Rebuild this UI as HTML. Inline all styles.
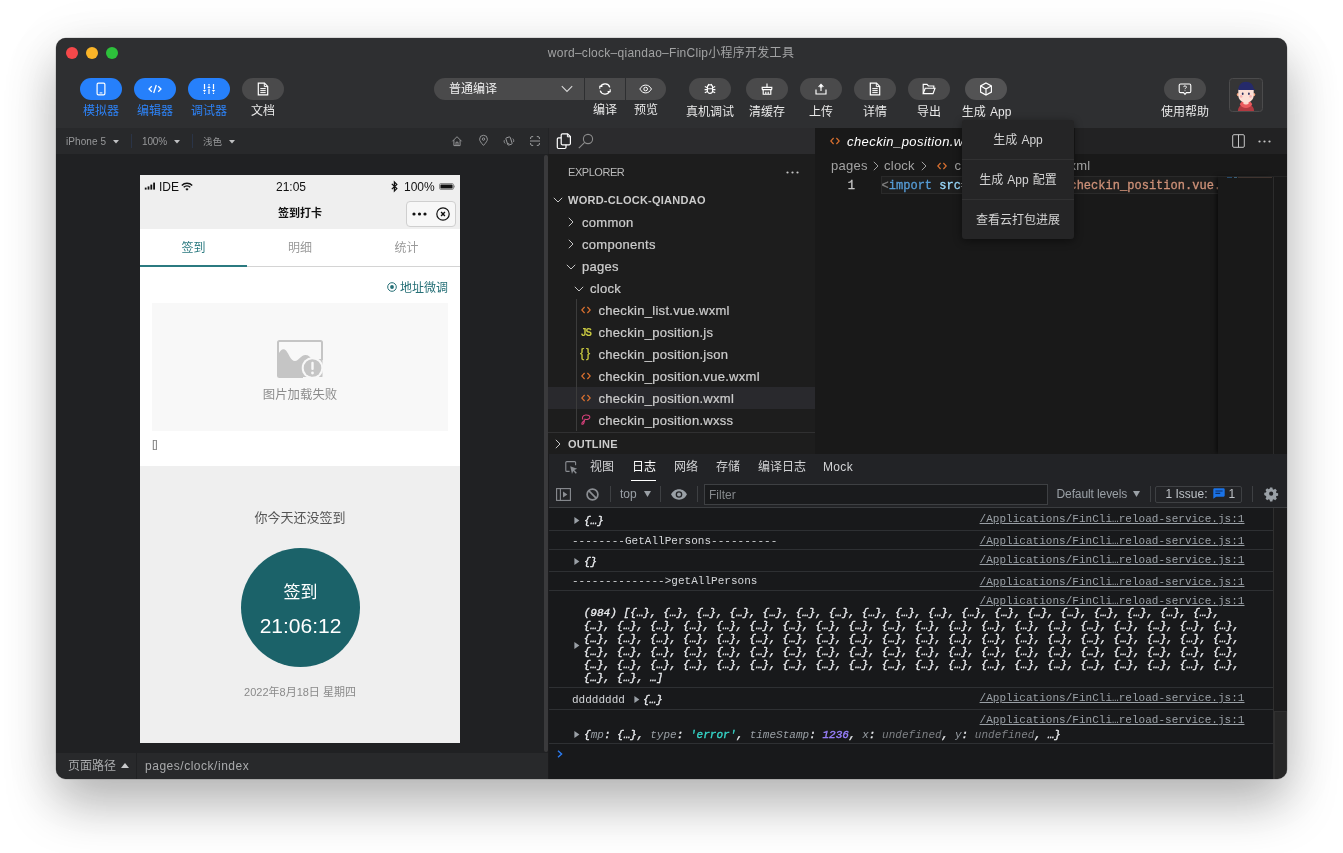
<!DOCTYPE html>
<html lang="zh-CN">
<head>
<meta charset="utf-8">
<title>word-clock-qiandao-FinClip小程序开发工具</title>
<style>
*{box-sizing:border-box;margin:0;padding:0}
html,body{width:1343px;height:853px;overflow:hidden;background:#fff}
body{font-family:"Liberation Sans","Noto Sans CJK SC",sans-serif;font-size:12px;color:#fff;position:relative}
.a{position:absolute}
#win{position:absolute;left:56px;top:38px;width:1231px;height:741px;border-radius:10px;overflow:hidden;background:#2e2f31;z-index:2}
#shadow{position:absolute;left:56px;top:38px;width:1231px;height:741px;border-radius:10px;z-index:1;
 box-shadow:0 0 0 0.5px rgba(0,0,0,.2),0 26px 50px rgba(0,0,0,.26),0 8px 60px rgba(0,0,0,.08)}
#in{position:absolute;left:-56px;top:-38px;width:1343px;height:853px;will-change:transform}
svg{display:block;overflow:visible}
.ctr{text-align:center;white-space:nowrap}
.nw{white-space:nowrap}
/* toolbar */
.pill{position:absolute;top:78px;width:42px;height:22px;border-radius:11px;background:#4a4a4b}
.pill.on{background:#2680fb}
.pill svg{position:absolute;left:50%;top:50%}
.tl{position:absolute;top:103px;height:16px;line-height:16px;font-size:12px;width:80px;margin-left:-40px;text-align:center;white-space:nowrap;color:#e9e9e9}
.tl.on{color:#2d83f8}
.tr{height:18px;line-height:18px;font-size:13px;color:#cccccc;letter-spacing:0.300px;-webkit-text-stroke:0.220px}
.bc{height:17px;line-height:17px;font-size:13px;color:#a3a3a3;letter-spacing:0.250px}
.ct{font-size:11px;color:#e8eaed;letter-spacing:0.022px}
.pl{color:#d5d7da}
.ob{font-style:italic;-webkit-text-stroke:0.350px}
.lk{font-size:11px;color:#9aa0a6;text-decoration:underline;letter-spacing:0.022px}
.k{color:#9aa0a6;-webkit-text-stroke:0}.s{color:#35d4c7}.n{color:#9980ff}.u{color:#7f8286;-webkit-text-stroke:0}
.mono{font-family:"Liberation Mono","Noto Sans CJK SC",monospace}
</style>
</head>
<body>
<div id="shadow"></div>
<div id="win"><div id="in">

<!-- ===== TITLE + TOOLBAR ===== -->
<div class="a" id="topbar" style="left:56px;top:38px;width:1231px;height:90px;background:#2e2f31"></div>
<div class="a" style="left:66px;top:47px;width:12px;height:12px;border-radius:50%;background:#f5484a"></div>
<div class="a" style="left:86px;top:47px;width:12px;height:12px;border-radius:50%;background:#fbb528"></div>
<div class="a" style="left:106px;top:47px;width:12px;height:12px;border-radius:50%;background:#2dc13b"></div>
<div class="a ctr" style="left:471px;top:45px;width:400px;height:16px;line-height:16px;font-size:12px;letter-spacing:0.270px;color:#a2a3a4">word–clock–qiandao–FinClip小程序开发工具</div>

<!-- left group -->
<div class="pill on" style="left:80px"><svg width="10" height="14" style="margin:-7px 0 0 -5px" viewBox="0 0 10 14" fill="none" stroke="#fff" stroke-width="1.2"><rect x="1.1" y="1.1" width="7.8" height="11.8" rx="1.3"/><path d="M3.6 10.9h2.8" stroke-width="1"/></svg></div>
<div class="pill on" style="left:134px"><svg width="14" height="10" style="margin:-5px 0 0 -7px" viewBox="0 0 14 10" fill="none" stroke="#fff" stroke-width="1.25"><path d="M3.8 2.2L1 5l2.8 2.8M10.2 2.2L13 5l-2.8 2.8M8.3 1L5.7 9"/></svg></div>
<div class="pill on" style="left:188px"><svg width="14" height="12" style="margin:-6px 0 0 -7px" viewBox="0 0 14 12" fill="none" stroke="#fff" stroke-width="1.2"><path d="M2.5 1v5.2M7 11V5.8M11.5 1v5.2M2.5 11v-1.2M7 1v1.6M11.5 11v-1.2"/><path d="M0.7 7h3.6L2.5 9zM5.2 5h3.6L7 3zM9.7 7h3.6L11.5 9z" fill="#fff" stroke="none"/></svg></div>
<div class="pill" style="left:242px"><svg width="12" height="14" style="margin:-7px 0 0 -6px" viewBox="0 0 12 14" fill="none" stroke="#fff" stroke-width="1.2"><path d="M1.3 1.2h6.2l3.2 3.2v8.4H1.3z"/><path d="M7.3 1.4v3.2h3.2M3.3 6.6h5.4M3.3 8.6h5.4M3.3 10.6h5.4" stroke-width="1"/></svg></div>
<div class="tl on" style="left:101px;top:103px">模拟器</div>
<div class="tl on" style="left:155px;top:103px">编辑器</div>
<div class="tl on" style="left:209px;top:103px">调试器</div>
<div class="tl" style="left:263px;top:103px">文档</div>

<!-- compile group -->
<div class="a" style="left:434px;top:78px;width:232px;height:22px;border-radius:11px;background:#4a4a4b"></div>
<div class="a" style="left:584px;top:78px;width:1px;height:22px;background:#2e2f31"></div>
<div class="a" style="left:625px;top:78px;width:1px;height:22px;background:#2e2f31"></div>
<div class="a nw" style="left:449px;top:81px;height:16px;line-height:16px;font-size:12px;color:#f2f2f2">普通编译</div>
<svg class="a" style="left:561px;top:85px" width="12" height="8" viewBox="0 0 12 8" fill="none" stroke="#d8d8d8" stroke-width="1.1"><path d="M0.8 1.2L6 6.4l5.2-5.2"/></svg>
<svg class="a" style="left:598px;top:82px" width="14" height="14" viewBox="0 0 14 14" fill="none" stroke="#fff" stroke-width="1.3"><path d="M2.2 8.6A5 5 0 0 0 11.5 9.2M11.8 5.4A5 5 0 0 0 2.5 4.8"/><path d="M9.6 9.6h2.6v-2.4M4.4 4.4H1.8v2.4" stroke-width="1.1"/></svg>
<svg class="a" style="left:638.500px;top:84px" width="13.300" height="10" viewBox="0 0 16 12" fill="none" stroke="#fff" stroke-width="1.2"><path d="M1 6C2.8 2.8 5.2 1.3 8 1.3S13.2 2.8 15 6c-1.8 3.2-4.2 4.7-7 4.7S2.8 9.200 1 6z"/><circle cx="8" cy="6" r="2.2"/></svg>
<div class="tl" style="left:605px;top:102px">编译</div>
<div class="tl" style="left:646px;top:102px">预览</div>

<!-- right group -->
<div class="pill" style="left:689px"><svg width="12" height="12" style="margin:-6px 0 0 -6px" viewBox="0 0 12 12" fill="none" stroke="#fff" stroke-width="1.1"><path d="M3.4 4.4a2.600 2.600 0 0 1 5.200 0v3.400a2.600 2.600 0 0 1-5.200 0z"/><path d="M3.400 5.800h5.200M0.800 3.600l2.600 1.200M11.200 3.600l-2.600 1.200M0.600 6.600h2.800M11.400 6.600H8.600M0.800 9.800l2.600-1.400M11.200 9.800l-2.600-1.400M4.200 1l1 1.200M7.800 1l-1 1.200"/></svg></div>
<div class="pill" style="left:746px"><svg width="12" height="12" style="margin:-6px 0 0 -6px" viewBox="0 0 12 12" fill="none" stroke="#fff" stroke-width="1.15"><path d="M6 0.600v3.400M1.200 6.600V4.400h9.600v2.200M1 6.600h10M2.200 6.800v4.400h7.600V6.800M4.800 11V8.800M7.200 11V8.800"/></svg></div>
<div class="pill" style="left:800px"><svg width="12" height="12" style="margin:-6px 0 0 -6px" viewBox="0 0 12 12" fill="none" stroke="#fff" stroke-width="1.15"><path d="M1 6.600v4.400h10V6.600"/><path d="M6 8V1.800M3.600 3.800L6 1.400l2.400 2.400" /><path d="M4.600 4.400h2.800L6 1.600z" fill="#fff" stroke="none"/></svg></div>
<div class="pill" style="left:854px"><svg width="12" height="14" style="margin:-7px 0 0 -6px" viewBox="0 0 12 14" fill="none" stroke="#fff" stroke-width="1.2"><path d="M1.300 1.200h6.200l3.200 3.200v8.400H1.300z"/><path d="M7.300 1.400v3.200h3.200M3.300 6.600h5.400M3.300 8.600h5.400M3.300 10.600h5.400" stroke-width="1"/></svg></div>
<div class="pill" style="left:908px"><svg width="14" height="12" style="margin:-6px 0 0 -7px" viewBox="0 0 14 12" fill="none" stroke="#fff" stroke-width="1.15"><path d="M1.200 10.600V1.400h3.800l1.400 1.600h5.400v2.200"/><path d="M1.200 10.600l2-5.400h9.800l-2 5.400z"/></svg></div>
<div class="pill" style="left:965px;background:#535354"><svg width="14" height="14" style="margin:-7px 0 0 -7px" viewBox="0 0 14 14" fill="none" stroke="#fff" stroke-width="1.150"><path d="M7 0.900l5.400 3v6.200L7 13.100l-5.400-3V3.900z"/><path d="M1.800 4L7 7l5.200-3M7 7v6"/></svg></div>
<div class="tl" style="left:710px;top:103.500px">真机调试</div>
<div class="tl" style="left:767px;top:103.500px">清缓存</div>
<div class="tl" style="left:821px;top:103.500px">上传</div>
<div class="tl" style="left:875px;top:103.500px">详情</div>
<div class="tl" style="left:929px;top:103.500px">导出</div>
<div class="tl" style="left:986.500px;top:103.500px;word-spacing:1px">生成 App</div>

<!-- help + avatar -->
<div class="pill" style="left:1164px"><svg width="14" height="13" style="margin:-6px 0 0 -7px" viewBox="0 0 14 13" fill="none" stroke="#fff" stroke-width="1.100"><path d="M2.600 1h8.800a1.400 1.400 0 0 1 1.400 1.400v5.800a1.400 1.400 0 0 1-1.400 1.400H8.400L7 11.400 5.600 9.600H2.600a1.400 1.400 0 0 1-1.400-1.400V2.400A1.400 1.400 0 0 1 2.600 1z"/><path d="M5.700 4.100a1.300 1.300 0 1 1 1.900 1.200c-.4.200-.6.500-.6.900M7 7.400v.7" stroke-width="1"/></svg></div>
<div class="tl" style="left:1185px;top:103.500px">使用帮助</div>
<div class="a" id="avatar" style="left:1229px;top:78px;width:34px;height:34px;border-radius:3.500px;background:#353536;border:1px solid #4b4b4c;overflow:hidden">
<svg width="32" height="32" viewBox="0 0 32 32"><path d="M7.900 32c0-3.400 2-5.600 4.600-6.200h7c2.600.600 4.600 2.800 4.600 6.200z" fill="#b23a41"/><path d="M9.800 25.200c.800-2 2.400-3 3.400-3.200h5.600c1 .200 2.600 1.200 3.400 3.200-1.200 2.600-3.600 3.800-6.200 3.800s-5-1.200-6.200-3.800z" fill="#ea5a5d"/><path d="M13.400 21h5.200v3.400c-.800 1.400-4.400 1.400-5.200 0z" fill="#fbd9cd"/><ellipse cx="8" cy="15.600" rx="1.200" ry="1.600" fill="#f3a079"/><ellipse cx="24" cy="15.600" rx="1.200" ry="1.600" fill="#f3a079"/><path d="M8.300 10.500h15.400v5.500c0 4.600-3.400 7.600-7.700 7.600s-7.700-3-7.700-7.600z" fill="#fde0d6"/><path d="M8.300 10.900C8.300 5.900 11.600 2.700 16 2.700s7.700 3.200 7.700 7.200l1 .100c.500 0 .500 1 0 1H8.300z" fill="#252a6b"/><ellipse cx="12.700" cy="14.700" rx=".900" ry="1.300" fill="#2a2d5e"/><ellipse cx="18.900" cy="14.700" rx=".900" ry="1.300" fill="#2a2d5e"/><circle cx="11.200" cy="17.400" r="1.300" fill="#f9b4b4"/><circle cx="20.500" cy="17.400" r="1.300" fill="#f9b4b4"/></svg>
</div>


<!-- ===== DEVICE BAR ===== -->
<div class="a" style="left:56px;top:128px;width:492px;height:26px;background:#28292b"></div>

<div class="a nw" style="left:66px;top:135px;height:14px;line-height:14px;font-size:10px;letter-spacing:0.080px;color:#97989a">iPhone 5</div>
<svg class="a" style="left:113.300px;top:140.300px" width="6" height="3.500" viewBox="0 0 6 3.500"><path d="M0 0h6L3 3.500z" fill="#c0c1c3"/></svg>
<div class="a" style="left:131px;top:134px;width:1px;height:14px;background:#2a3447"></div>
<div class="a nw" style="left:142px;top:135px;height:14px;line-height:14px;font-size:10px;letter-spacing:-0.150px;color:#97989a">100%</div>
<svg class="a" style="left:173.600px;top:140.300px" width="6" height="3.500" viewBox="0 0 6 3.500"><path d="M0 0h6L3 3.500z" fill="#c0c1c3"/></svg>
<div class="a" style="left:192px;top:134px;width:1px;height:14px;background:#2a3447"></div>
<div class="a nw" style="left:203px;top:135px;height:14px;line-height:14px;font-size:9.500px;color:#97989a">浅色</div>
<svg class="a" style="left:228.600px;top:140.300px" width="6" height="3.500" viewBox="0 0 6 3.500"><path d="M0 0h6L3 3.500z" fill="#c0c1c3"/></svg>
<!-- device bar icons -->
<svg class="a" style="left:452px;top:135.800px" width="10" height="10" viewBox="0 0 10 10" fill="none" stroke="#98999b" stroke-width="0.950"><path d="M0.400 5.300L5 0.700l4.600 4.600M1.900 4.200v5.400h6.200V4.200M4 9.600V6.200h2v3.400"/></svg>
<svg class="a" style="left:479px;top:135px" width="9" height="11" viewBox="0 0 9 11" fill="none" stroke="#98999b" stroke-width="0.950"><path d="M4.500 10.400C2 7.700 0.600 5.700 0.600 4.200a3.900 3.900 0 0 1 7.800 0c0 1.500-1.400 3.500-3.900 6.200z"/><circle cx="4.500" cy="4.100" r="1.200"/></svg>
<svg class="a" style="left:503px;top:135px" width="12" height="12" viewBox="0 0 12 12" fill="none" stroke="#9a9b9d" stroke-width="0.900"><rect x="3.700" y="2.200" width="4.600" height="7.600" rx="0.900" transform="rotate(-18 6 6)"/><path d="M4.600 9l1.600-.500" transform="rotate(0)"/><path d="M1.300 5.200c-.400 1.200-.100 2.400.800 3.200M10.500 7c.500-1.200.200-2.500-.700-3.400"/></svg>
<svg class="a" style="left:530px;top:136px" width="10" height="10" viewBox="0 0 10 10" fill="none" stroke="#9a9b9d" stroke-width="1"><path d="M0.600 3V2A1.400 1.400 0 0 1 2 0.600h1.200M6.800 0.600H8A1.400 1.400 0 0 1 9.400 2v1M0.600 7V8A1.400 1.400 0 0 0 2 9.400h1.200M6.800 9.400H8A1.400 1.400 0 0 0 9.400 8V7M0 5h10"/></svg>


<!-- ===== SIMULATOR ===== -->
<div class="a" style="left:56px;top:154px;width:492px;height:599px;background:#202123"></div>
<div class="a" style="left:544.200px;top:155px;width:3.600px;height:597px;border-radius:2px;background:#3a3a3c"></div>

<div class="a" id="phone" style="left:140px;top:175px;width:320px;height:568px;background:#efefef;color:#000;overflow:hidden">
 <div class="a" style="left:0;top:0;width:320px;height:54px;background:#efefef"></div>
 <!-- status -->
 <svg class="a" style="left:4px;top:7px" width="12" height="8" viewBox="0 0 12 8" fill="#111"><rect x="0.800" y="5.600" width="1.800" height="2"/><rect x="3.600" y="4.400" width="1.800" height="3.200"/><rect x="6.400" y="2.600" width="1.800" height="5"/><rect x="9.200" y="0.600" width="1.800" height="7"/></svg>
 <div class="a nw" style="left:19px;top:4px;height:16px;line-height:16px;font-size:12px;color:#111">IDE</div>
 <svg class="a" style="left:41px;top:7px" width="12" height="9" viewBox="0 0 12 9" fill="none" stroke="#111" stroke-width="1.400"><path d="M0.800 3.400a7.400 7.400 0 0 1 10.400 0M2.700 5.300a4.700 4.700 0 0 1 6.600 0"/><path d="M4.400 7L6 8.700 7.600 7a2.300 2.300 0 0 0-3.200 0z" fill="#111" stroke="none"/></svg>
 <div class="a ctr" style="left:101px;top:4px;width:100px;height:16px;line-height:16px;font-size:12px;color:#111">21:05</div>
 <svg class="a" style="left:251px;top:6px" width="7" height="11" viewBox="0 0 7 11" fill="none" stroke="#111" stroke-width="1.250"><path d="M0.800 2.900l5 4.700L3.400 10V1l2.400 2.400-5 4.700"/></svg>
 <div class="a nw" style="left:264px;top:4px;height:16px;line-height:16px;font-size:12px;color:#111">100%</div>
 <svg class="a" style="left:299px;top:8px" width="17" height="7" viewBox="0 0 17 7"><rect x="0.500" y="0.500" width="14" height="6" rx="1.400" fill="none" stroke="#777" stroke-width="0.800"/><rect x="1.400" y="1.400" width="12.200" height="4.200" rx="0.700" fill="#111"/><path d="M15.300 2.300c.8.200.8 2.200 0 2.400z" fill="#555"/></svg>
 <!-- nav -->
 <div class="a ctr" style="left:60px;top:30px;width:200px;height:16px;line-height:16px;font-size:11px;font-weight:bold;color:#111">签到打卡</div>
 <div class="a" style="left:266px;top:26px;width:50px;height:26px;border:1px solid #cfcfcf;border-radius:4px;background:#f7f7f7"></div>
 <svg class="a" style="left:272px;top:37px" width="15" height="4" viewBox="0 0 15 4" fill="#111"><circle cx="2" cy="2" r="1.600"/><circle cx="7.500" cy="2" r="1.600"/><circle cx="13" cy="2" r="1.600"/></svg>
 <svg class="a" style="left:296px;top:32px" width="14" height="14" viewBox="0 0 14 14" fill="none" stroke="#111"><circle cx="7" cy="7" r="6.200" stroke-width="1.200"/><path d="M5.100 5.100l3.800 3.800M8.900 5.100L5.100 8.900" stroke-width="1.400"/></svg>
 <!-- tabs -->
 <div class="a" style="left:0;top:54px;width:320px;height:237px;background:#fff"></div>
 <div class="a ctr" style="left:0;top:65px;width:107px;height:16px;line-height:16px;font-size:12px;color:#2b7a80">签到</div>
 <div class="a ctr" style="left:107px;top:65px;width:106px;height:16px;line-height:16px;font-size:12px;color:#9a9a9a">明细</div>
 <div class="a ctr" style="left:213px;top:65px;width:107px;height:16px;line-height:16px;font-size:12px;color:#9a9a9a">统计</div>
 <div class="a" style="left:0;top:91px;width:320px;height:1px;background:#d4d4d4"></div>
 <div class="a" style="left:0;top:90px;width:107px;height:2px;background:#2b7a80"></div>
 <!-- content -->
 <svg class="a" style="left:247px;top:107px" width="10" height="10" viewBox="0 0 10 10" fill="none" stroke="#256f76"><circle cx="5" cy="5" r="4.300" stroke-width="1"/><circle cx="5" cy="5" r="1.900" fill="#256f76" stroke="none"/></svg>
 <div class="a nw" style="left:260px;top:104.500px;height:16px;line-height:16px;font-size:12px;color:#256f76">地址微调</div>
 <div class="a" style="left:12px;top:128px;width:296px;height:128px;background:#f8f8f8"></div>
 <svg class="a" style="left:137px;top:165px" width="47" height="38" viewBox="0 0 47 38"><rect x="1" y="1" width="44" height="36" rx="1.500" fill="none" stroke="#c5c5c5" stroke-width="2"/><path d="M1.500 37V14c2-4.500 5-6 7.500-3.500 3 3.500 4.500 10.500 9 10.500 4 0 5.500-6 10.500-6 3 0 4.500 2 6 4l10 0V37z" fill="#c5c5c5"/><circle cx="35.500" cy="28" r="10.800" fill="#f8f8f8"/><circle cx="35.500" cy="28" r="8.800" fill="#c5c5c5"/><rect x="34.300" y="21.800" width="2.400" height="8.200" rx="1.100" fill="#f8f8f8"/><circle cx="35.500" cy="33" r="1.400" fill="#f8f8f8"/><rect x="26" y="37" width="21" height="3" fill="#f8f8f8"/><rect x="45.500" y="20" width="3" height="20" fill="#f8f8f8"/></svg>
 <div class="a ctr" style="left:60px;top:212px;width:200px;height:16px;line-height:16px;font-size:12.400px;color:#8c8c8c">图片加载失败</div>
 <div class="a nw" style="left:12px;top:260.800px;height:16px;line-height:16px;font-size:11.500px;color:#808080;letter-spacing:-0.600px">[]</div>
 <!-- bottom -->
 <div class="a ctr" style="left:60px;top:334px;width:200px;height:18px;line-height:18px;font-size:13px;color:#555">你今天还没签到</div>
 <div class="a" style="left:101px;top:373px;width:119px;height:119px;border-radius:50%;background:#1b6269"></div>
 <div class="a ctr" style="left:101px;top:405.500px;width:119px;height:24px;line-height:24px;font-size:17px;color:#fff">签到</div>
 <div class="a ctr" style="left:101px;top:438px;width:119px;height:26px;line-height:26px;font-size:21px;color:#fff">21:06:12</div>
 <div class="a ctr" style="left:60px;top:509px;width:200px;height:16px;line-height:16px;font-size:11px;color:#8a8a8a">2022年8月18日 星期四</div>
</div>


<!-- ===== SIM STATUS BAR ===== -->
<div class="a" style="left:56px;top:753px;width:492px;height:26px;background:#28292b"></div>

<div class="a nw" style="left:68px;top:758px;height:16px;line-height:16px;font-size:12px;color:#a9aaac">页面路径</div>
<svg class="a" style="left:121px;top:763px" width="8" height="5" viewBox="0 0 8 5"><path d="M0 5h8L4 0z" fill="#c8c9cb"/></svg>
<div class="a" style="left:136px;top:753px;width:1px;height:26px;background:#202123"></div>
<div class="a nw" style="left:145px;top:758px;height:16px;line-height:16px;font-size:12px;letter-spacing:0.520px;color:#a9aaac">pages/clock/index</div>


<!-- ===== EDITOR ===== -->
<div class="a" style="left:548px;top:128px;width:739px;height:326px;background:#1c1c1c"></div>
<div class="a" style="left:548px;top:128px;width:267px;height:26px;background:#2b2b2d"></div>
<div class="a" style="left:548px;top:154px;width:267px;height:300px;background:#1d1d1d"></div>
<div class="a" style="left:815px;top:128px;width:472px;height:26px;background:#222223"></div>
<div class="a" style="left:815px;top:128px;width:260px;height:26px;background:#191919"></div>
<div class="a" style="left:815px;top:154px;width:472px;height:300px;background:#191919"></div>
<svg class="a" style="left:556px;top:133px" width="16" height="17" viewBox="0 0 16 17" fill="none" stroke="#fff" stroke-width="1.200"><path d="M6.400 0.800h5.200l2.800 2.800v7a1.200 1.200 0 0 1-1.200 1.200H6.400a1.200 1.200 0 0 1-1.200-1.200V2a1.200 1.200 0 0 1 1.200-1.200z"/><path d="M11.400 1v2.800h2.800" stroke-width="1"/><path d="M5.200 4.900H2.500a1.200 1.200 0 0 0-1.200 1.200v8.200a1.200 1.200 0 0 0 1.200 1.200h6.300a1.200 1.200 0 0 0 1.200-1.200v-2.500"/></svg>
<svg class="a" style="left:578px;top:133px" width="16" height="16" viewBox="0 0 16 16" fill="none" stroke="#8c8c8c" stroke-width="1.100"><circle cx="10" cy="6" r="4.600"/><path d="M6.700 9.300L0.800 15.200"/></svg>
<div class="a nw" style="left:568px;top:164px;height:16px;line-height:16px;font-size:11px;letter-spacing:-0.450px;color:#bbbbbb">EXPLORER</div>
<svg class="a" style="left:786px;top:171px" width="13" height="3" viewBox="0 0 13 3" fill="#c5c5c5"><circle cx="1.500" cy="1.500" r="1.100"/><circle cx="6.500" cy="1.500" r="1.100"/><circle cx="11.500" cy="1.500" r="1.100"/></svg>
<svg class="a" style="left:553px;top:197px" width="10" height="6" viewBox="0 0 10 6"><path d="M0.800 0.800L5 5 9.200 0.800" fill="none" stroke="#c5c5c5" stroke-width="1"/></svg>
<div class="a nw" id="t_root" style="left:568px;top:192px;height:16px;line-height:16px;font-size:11px;font-weight:bold;letter-spacing:0.250px;color:#cccccc">WORD-CLOCK-QIANDAO</div>
<div class="a" style="left:548px;top:387px;width:267px;height:22px;background:#29292d"></div>
<div class="a" style="left:576px;top:299px;width:1px;height:132px;background:#3c3c3c"></div>
<svg class="a" style="left:568px;top:217px" width="6" height="10" viewBox="0 0 6 10"><path d="M0.800 0.800L5 5 0.800 9.200" fill="none" stroke="#c5c5c5" stroke-width="1"/></svg>
<div class="a nw tr" style="left:582px;top:214px">common</div>
<svg class="a" style="left:568px;top:239px" width="6" height="10" viewBox="0 0 6 10"><path d="M0.800 0.800L5 5 0.800 9.200" fill="none" stroke="#c5c5c5" stroke-width="1"/></svg>
<div class="a nw tr" style="left:582px;top:236px">components</div>
<svg class="a" style="left:566px;top:264px" width="10" height="6" viewBox="0 0 10 6"><path d="M0.800 0.800L5 5 9.200 0.800" fill="none" stroke="#c5c5c5" stroke-width="1"/></svg>
<div class="a nw tr" style="left:582px;top:258px">pages</div>
<svg class="a" style="left:574px;top:286px" width="10" height="6" viewBox="0 0 10 6"><path d="M0.800 0.800L5 5 9.200 0.800" fill="none" stroke="#c5c5c5" stroke-width="1"/></svg>
<div class="a nw tr" style="left:590px;top:280px">clock</div>
<svg class="a" style="left:581px;top:306px" width="10" height="8" viewBox="0 0 10 8"><path d="M3.600 1L0.800 4l2.800 3M6.400 1l2.800 3-2.800 3" fill="none" stroke="#d9702f" stroke-width="1.150"/></svg>
<div class="a nw tr" style="left:598.500px;top:302px">checkin_list.vue.wxml</div>
<div class="a nw" style="left:580.500px;top:325px;height:14px;line-height:14px;font-size:10.500px;font-weight:bold;color:#cbcb41;letter-spacing:-0.900px;transform:scaleX(.92);transform-origin:0 0">JS</div>
<div class="a nw tr" style="left:598.500px;top:324px">checkin_position.js</div>
<div class="a nw" style="left:580px;top:345.5px;height:14px;line-height:14px;font-size:12.500px;color:#cbcb41;letter-spacing:1.800px;-webkit-text-stroke:0.250px">{}</div>
<div class="a nw tr" style="left:598.500px;top:346px">checkin_position.json</div>
<svg class="a" style="left:581px;top:372px" width="10" height="8" viewBox="0 0 10 8"><path d="M3.600 1L0.800 4l2.800 3M6.400 1l2.800 3-2.800 3" fill="none" stroke="#d9702f" stroke-width="1.150"/></svg>
<div class="a nw tr" style="left:598.500px;top:368px">checkin_position.vue.wxml</div>
<svg class="a" style="left:581px;top:394px" width="10" height="8" viewBox="0 0 10 8"><path d="M3.600 1L0.800 4l2.800 3M6.400 1l2.800 3-2.800 3" fill="none" stroke="#d9702f" stroke-width="1.150"/></svg>
<div class="a nw tr" style="left:598.500px;top:390px">checkin_position.wxml</div>
<svg class="a" style="left:581px;top:414px" width="10" height="12" viewBox="0 0 10 12" fill="none" stroke="#d6407a" stroke-width="1.100"><path d="M2.200 5.600C0.600 4.200 1.400 1.400 4.600 1c2.600-0.300 4.600 0.800 4.200 2.600C8.400 5.400 5.400 6 4 5.200 3.200 6.400 3.400 8 2.600 9.600c-0.400 0.800-1.600 1-1.800 0.200C0.600 8.800 2 7.600 3 6.800"/></svg>
<div class="a nw tr" style="left:598.500px;top:412px">checkin_position.wxss</div>
<div class="a" style="left:548px;top:432px;width:267px;height:1px;background:#303031"></div>
<svg class="a" style="left:555px;top:439px" width="6" height="10" viewBox="0 0 6 10"><path d="M0.800 0.800L5 5 0.800 9.200" fill="none" stroke="#c5c5c5" stroke-width="1"/></svg>
<div class="a nw" style="left:568px;top:436px;height:16px;line-height:16px;font-size:11px;font-weight:bold;letter-spacing:0.200px;color:#cccccc">OUTLINE</div>
<svg class="a" style="left:830px;top:137px" width="10" height="8" viewBox="0 0 10 8"><path d="M3.600 1L0.800 4l2.800 3M6.400 1l2.800 3-2.800 3" fill="none" stroke="#d9702f" stroke-width="1.150"/></svg>
<div class="a nw" style="left:847px;top:133px;height:17px;line-height:17px;font-size:13px;font-style:italic;letter-spacing:0.420px;color:#ffffff">checkin_position.wxml</div>
<svg class="a" style="left:1232px;top:134px" width="13" height="14" viewBox="0 0 13 14" fill="none" stroke="#c5c5c5" stroke-width="1"><rect x="0.700" y="0.700" width="11.600" height="12.600" rx="1.200"/><path d="M6.500 0.700v12.600"/></svg>
<svg class="a" style="left:1258px;top:140px" width="13" height="3" viewBox="0 0 13 3" fill="#c5c5c5"><circle cx="1.500" cy="1.500" r="1.100"/><circle cx="6.500" cy="1.500" r="1.100"/><circle cx="11.500" cy="1.500" r="1.100"/></svg>
<div class="a nw bc" style="left:831px;top:157px">pages</div>
<svg class="a" style="left:873px;top:161px" width="6" height="10" viewBox="0 0 6 10"><path d="M0.800 0.800L5 5 0.800 9.200" fill="none" stroke="#a0a0a0" stroke-width="1"/></svg>
<div class="a nw bc" style="left:884px;top:157px">clock</div>
<svg class="a" style="left:921px;top:161px" width="6" height="10" viewBox="0 0 6 10"><path d="M0.800 0.800L5 5 0.800 9.200" fill="none" stroke="#a0a0a0" stroke-width="1"/></svg>
<svg class="a" style="left:937px;top:162px" width="10" height="8" viewBox="0 0 10 8"><path d="M3.600 1L0.800 4l2.800 3M6.400 1l2.800 3-2.800 3" fill="none" stroke="#d9702f" stroke-width="1.150"/></svg>
<div class="a nw bc" style="left:954.500px;top:157px;letter-spacing:0.320px">checkin_position.wxml</div>
<div class="a" style="left:881px;top:176px;width:338px;height:17.500px;border:1px solid #2a2a2a;background:#1e1e1e"></div>
<div class="a nw mono" style="left:815px;top:176.700px;width:40px;text-align:right;height:18px;line-height:18px;font-size:12px;-webkit-text-stroke:0.300px;color:#c6c6c6">1</div>
<div class="a nw mono" style="left:881.500px;top:176.700px;width:336.500px;overflow:hidden;height:18px;line-height:18px;font-size:12px;letter-spacing:0.024px;-webkit-text-stroke:0.300px;color:#808080">&lt;<span style="color:#569cd6">import</span> <span style="color:#9cdcfe">src</span><span style="color:#d4d4d4">=</span><span style="color:#ce9178">"/pages/clock/checkin_position.vue.wxml"</span>/&gt;</div>
<div class="a" style="left:1218px;top:176px;width:55px;height:278px;background:#191919;box-shadow:-3px 0 4px -1px rgba(0,0,0,.55)"></div>
<div class="a" style="left:1226.500px;top:177px;width:5.500px;height:1px;background:#264b6c"></div><div class="a" style="left:1233.500px;top:177px;width:3px;height:1px;background:#3c6076"></div><div class="a" style="left:1237.500px;top:177px;width:34.500px;height:1px;background:#40342f"></div>
<div class="a" style="left:1273px;top:176px;width:1px;height:278px;background:#2c2c2c"></div>
<div class="a" style="left:1218px;top:176px;width:69px;height:1px;background:#242424"></div>

<!-- ===== DEBUGGER ===== -->
<div class="a" style="left:548px;top:454px;width:739px;height:325px;background:#18191b"></div>
<div class="a" style="left:548px;top:454px;width:739px;height:54px;background:#222326"></div>
<div class="a" style="left:548px;top:507px;width:739px;height:1px;background:#3b3d40"></div>
<div class="a" style="left:548px;top:454px;width:1px;height:325px;background:#1b1b1d"></div>
<svg class="a" style="left:565px;top:461px" width="13" height="13" viewBox="0 0 13 13" fill="none" stroke="#8a8d92" stroke-width="1.100"><path d="M4.600 10.400H1.800a1 1 0 0 1-1-1V1.600a1 1 0 0 1 1-1h7.800a1 1 0 0 1 1 1v2.600"/><path d="M5.200 5.200l7 2.600-3 1.300 2.600 2.600-1 1-2.600-2.600-1.200 3z" fill="#8a8d92" stroke="none"/></svg>
<div class="a nw" style="left:590px;top:458.700px;height:16px;line-height:16px;font-size:12px;color:#d2d3d5">视图</div>
<div class="a nw" style="left:632px;top:458.700px;height:16px;line-height:16px;font-size:12px;color:#ffffff">日志</div>
<div class="a nw" style="left:674px;top:458.700px;height:16px;line-height:16px;font-size:12px;color:#d2d3d5">网络</div>
<div class="a nw" style="left:716px;top:458.700px;height:16px;line-height:16px;font-size:12px;color:#d2d3d5">存储</div>
<div class="a nw" style="left:758px;top:458.700px;height:16px;line-height:16px;font-size:12px;color:#d2d3d5">编译日志</div>
<div class="a nw" style="left:823px;top:458.700px;height:16px;line-height:16px;font-size:12px;letter-spacing:0.350px;color:#d2d3d5">Mock</div>
<div class="a" style="left:631px;top:479.500px;width:24.500px;height:1.500px;background:#fff"></div>
<svg class="a" style="left:556px;top:488px" width="15" height="13" viewBox="0 0 15 13" fill="none" stroke="#8a8d92" stroke-width="1.100"><rect x="0.600" y="0.600" width="13.800" height="11.800"/><path d="M4.400 0.600v11.800"/><path d="M7 3.600v5.800l4.400-2.900z" fill="#8a8d92" stroke="none"/></svg>
<svg class="a" style="left:586px;top:488px" width="13" height="13" viewBox="0 0 13 13" fill="none" stroke="#8a8d92" stroke-width="1.700"><circle cx="6.500" cy="6.500" r="5.400"/><path d="M2.700 2.700l7.600 7.600"/></svg>
<div class="a" style="left:610px;top:486px;width:1px;height:16px;background:#3e4043"></div>
<div class="a" style="left:660px;top:486px;width:1px;height:16px;background:#3e4043"></div>
<div class="a" style="left:697px;top:486px;width:1px;height:16px;background:#3e4043"></div>
<div class="a" style="left:1150px;top:486px;width:1px;height:16px;background:#3e4043"></div>
<div class="a" style="left:1252px;top:486px;width:1px;height:16px;background:#3e4043"></div>
<div class="a nw" style="left:620px;top:486px;height:16px;line-height:16px;font-size:12px;color:#9aa0a6">top</div>
<svg class="a" style="left:644px;top:491px" width="7" height="6" viewBox="0 0 7 6"><path d="M0 0h7L3.500 6z" fill="#9aa0a6"/></svg>
<svg class="a" style="left:671px;top:489px" width="16" height="11" viewBox="0 0 16 11"><path d="M8 0.300C4.400 0.300 1.400 2.400 0.200 5.500 1.400 8.600 4.400 10.700 8 10.700s6.600-2.100 7.800-5.200C14.600 2.400 11.600 0.300 8 0.300z" fill="#9aa0a6"/><circle cx="8" cy="5.500" r="3.300" fill="#222326"/><circle cx="8" cy="5.500" r="2" fill="#9aa0a6"/></svg>
<div class="a" style="left:704px;top:483.800px;width:343.500px;height:21px;border:1px solid #3e4043;background:#1a1b1d"></div>
<div class="a nw" style="left:709px;top:486.500px;height:16px;line-height:16px;font-size:12px;color:#85888c">Filter</div>
<div class="a nw" style="left:1056.500px;top:485.500px;height:16px;line-height:16px;font-size:12px;letter-spacing:-0.100px;color:#9aa0a6">Default levels</div>
<svg class="a" style="left:1133px;top:491px" width="7" height="6" viewBox="0 0 7 6"><path d="M0 0h7L3.500 6z" fill="#9aa0a6"/></svg>
<div class="a" style="left:1155px;top:485.500px;width:87px;height:17px;border:1px solid #3e4043;border-radius:2px"></div>
<div class="a nw" style="left:1165.500px;top:485.500px;height:17px;line-height:17px;font-size:12px;color:#bdc1c6">1 Issue:</div>
<svg class="a" style="left:1213px;top:488px" width="12" height="11" viewBox="0 0 12 11"><path d="M1.400 0.300h9.200a1.100 1.100 0 0 1 1.100 1.100v6.200a1.100 1.100 0 0 1-1.100 1.100H3.200L0.300 10.800V1.400A1.100 1.100 0 0 1 1.400 0.300z" fill="#1a73e8"/><path d="M2.400 3h7.200M2.400 5.400h4.800" stroke="#0d2f66" stroke-width="1.100"/></svg>
<div class="a nw" style="left:1228.500px;top:485.500px;height:17px;line-height:17px;font-size:12px;color:#bdc1c6">1</div>
<svg class="a" style="left:1264px;top:487px" width="14" height="14" viewBox="0 0 14 14"><path fill="#9aa0a6" fill-rule="evenodd" d="M5.700 0.200h2.600l0.400 1.900 1.100 0.500 1.700-1 1.800 1.800-1 1.700 0.500 1.100 1.900 0.400v2.600l-1.900 0.400-0.500 1.100 1 1.700-1.800 1.800-1.700-1-1.100 0.500-0.400 1.900H5.700l-0.400-1.900-1.100-0.500-1.700 1-1.800-1.800 1-1.700-0.500-1.100L-0.700 8.600V6l1.900-0.400 0.500-1.100-1-1.700L2.500 1l1.700 1 1.100-0.500zM7 4.700a2.300 2.300 0 1 0 0 4.600 2.300 2.300 0 0 0 0-4.600z" transform="translate(0.700 0) scale(0.900) translate(0.200 0.400)"/></svg>
<div class="a" style="left:1273px;top:508px;width:14px;height:271px;background:#1c1c1d"></div><div class="a" style="left:1273.500px;top:711px;width:13.500px;height:69px;background:#272727;border:1px solid #303030;border-bottom:0"></div>
<div class="a" style="left:1273px;top:508px;width:1px;height:271px;background:#2f2f2f"></div>
<div class="a" style="left:549px;top:530px;width:724px;height:1px;background:#2e3033"></div>
<div class="a" style="left:549px;top:549px;width:724px;height:1px;background:#2e3033"></div>
<div class="a" style="left:549px;top:571px;width:724px;height:1px;background:#2e3033"></div>
<div class="a" style="left:549px;top:590px;width:724px;height:1px;background:#2e3033"></div>
<div class="a" style="left:549px;top:687px;width:724px;height:1px;background:#2e3033"></div>
<div class="a" style="left:549px;top:709px;width:724px;height:1px;background:#2e3033"></div>
<div class="a" style="left:549px;top:743px;width:724px;height:1px;background:#2e3033"></div>
<svg class="a" style="left:574px;top:516.600px" width="6" height="7" viewBox="0 0 6 7"><path d="M0.400 0l5 3.500-5 3.500z" fill="#9aa0a6"/></svg>
<div class="a nw mono ct ob" style="left:584px;top:514px;height:14px;line-height:14px">{…}</div>
<div class="a nw mono lk" style="left:945px;width:299.500px;text-align:right;top:512.06px;height:14px;line-height:14px">/Applications/FinCli…reload-service.js:1</div>
<div class="a nw mono ct pl" style="left:572px;top:534.200px;height:14px;line-height:14px">--------GetAllPersons----------</div>
<div class="a nw mono lk" style="left:945px;width:299.500px;text-align:right;top:534.06px;height:14px;line-height:14px">/Applications/FinCli…reload-service.js:1</div>
<svg class="a" style="left:574px;top:557.700px" width="6" height="7" viewBox="0 0 6 7"><path d="M0.400 0l5 3.500-5 3.500z" fill="#9aa0a6"/></svg>
<div class="a nw mono ct ob" style="left:584px;top:554.800px;height:14px;line-height:14px">{}</div>
<div class="a nw mono lk" style="left:945px;width:299.500px;text-align:right;top:553.36px;height:14px;line-height:14px">/Applications/FinCli…reload-service.js:1</div>
<div class="a nw mono ct pl" style="left:572px;top:574.300px;height:14px;line-height:14px">-------------->getAllPersons</div>
<div class="a nw mono lk" style="left:945px;width:299.500px;text-align:right;top:575.26px;height:14px;line-height:14px">/Applications/FinCli…reload-service.js:1</div>
<div class="a nw mono lk" style="left:945px;width:299.500px;text-align:right;top:594.36px;height:14px;line-height:14px">/Applications/FinCli…reload-service.js:1</div>
<div class="a nw mono ct ob" style="left:583.700px;top:606.20px;height:14px;line-height:14px">(984) [{…}, {…}, {…}, {…}, {…}, {…}, {…}, {…}, {…}, {…}, {…}, {…}, {…}, {…}, {…}, {…}, {…}, {…},</div>
<div class="a nw mono ct ob" style="left:583.700px;top:619.10px;height:14px;line-height:14px">{…}, {…}, {…}, {…}, {…}, {…}, {…}, {…}, {…}, {…}, {…}, {…}, {…}, {…}, {…}, {…}, {…}, {…}, {…}, {…},</div>
<div class="a nw mono ct ob" style="left:583.700px;top:632.00px;height:14px;line-height:14px">{…}, {…}, {…}, {…}, {…}, {…}, {…}, {…}, {…}, {…}, {…}, {…}, {…}, {…}, {…}, {…}, {…}, {…}, {…}, {…},</div>
<div class="a nw mono ct ob" style="left:583.700px;top:644.90px;height:14px;line-height:14px">{…}, {…}, {…}, {…}, {…}, {…}, {…}, {…}, {…}, {…}, {…}, {…}, {…}, {…}, {…}, {…}, {…}, {…}, {…}, {…},</div>
<div class="a nw mono ct ob" style="left:583.700px;top:657.80px;height:14px;line-height:14px">{…}, {…}, {…}, {…}, {…}, {…}, {…}, {…}, {…}, {…}, {…}, {…}, {…}, {…}, {…}, {…}, {…}, {…}, {…}, {…},</div>
<div class="a nw mono ct ob" style="left:583.700px;top:670.70px;height:14px;line-height:14px">{…}, {…}, …]</div>
<svg class="a" style="left:574px;top:642px" width="6" height="7" viewBox="0 0 6 7"><path d="M0.400 0l5 3.500-5 3.500z" fill="#9aa0a6"/></svg>
<div class="a nw mono ct pl" style="left:572px;top:693px;height:14px;line-height:14px">dddddddd</div>
<svg class="a" style="left:634px;top:695.800px" width="6" height="7" viewBox="0 0 6 7"><path d="M0.400 0l5 3.500-5 3.500z" fill="#9aa0a6"/></svg>
<div class="a nw mono ct ob" style="left:643px;top:693px;height:14px;line-height:14px">{…}</div>
<div class="a nw mono lk" style="left:945px;width:299.500px;text-align:right;top:691.30px;height:14px;line-height:14px">/Applications/FinCli…reload-service.js:1</div>
<div class="a nw mono lk" style="left:945px;width:299.500px;text-align:right;top:713.00px;height:14px;line-height:14px">/Applications/FinCli…reload-service.js:1</div>
<svg class="a" style="left:574px;top:730.800px" width="6" height="7" viewBox="0 0 6 7"><path d="M0.400 0l5 3.500-5 3.500z" fill="#9aa0a6"/></svg>
<div class="a nw mono ct ob" style="left:584px;top:727.600px;height:14px;line-height:14px">{<span class="k">mp</span>: {…}, <span class="k">type</span>: <span class="s">'error'</span>, <span class="k">timeStamp</span>: <span class="n">1236</span>, <span class="k">x</span>: <span class="u">undefined</span>, <span class="k">y</span>: <span class="u">undefined</span>, …}</div>
<svg class="a" style="left:557px;top:750px" width="6" height="8" viewBox="0 0 6 8"><path d="M1 0.800L4.600 4 1 7.200" fill="none" stroke="#2b7bf0" stroke-width="1.400"/></svg>

<div class="a" style="left:548px;top:128px;width:1px;height:26px;background:#232426"></div>
<!-- ===== DROPDOWN ===== -->

<div class="a" style="left:962px;top:120px;width:112px;height:119px;background:#252526;border-radius:3px;box-shadow:0 2px 8px rgba(0,0,0,.45)"></div>
<div class="a" style="left:962px;top:159px;width:112px;height:1px;background:#313132"></div>
<div class="a" style="left:962px;top:199px;width:112px;height:1px;background:#313132"></div>
<div class="a ctr" style="left:962px;top:131.900px;width:112px;height:16px;line-height:16px;font-size:12px;word-spacing:0.800px;color:#d4d4d4">生成 App</div>
<div class="a ctr" style="left:962px;top:172.300px;width:112px;height:16px;line-height:16px;font-size:12px;word-spacing:0.800px;color:#d4d4d4">生成 App 配置</div>
<div class="a ctr" style="left:962px;top:211.800px;width:112px;height:16px;line-height:16px;font-size:12px;color:#d4d4d4">查看云打包进展</div>


</div></div>
</body>
</html>
